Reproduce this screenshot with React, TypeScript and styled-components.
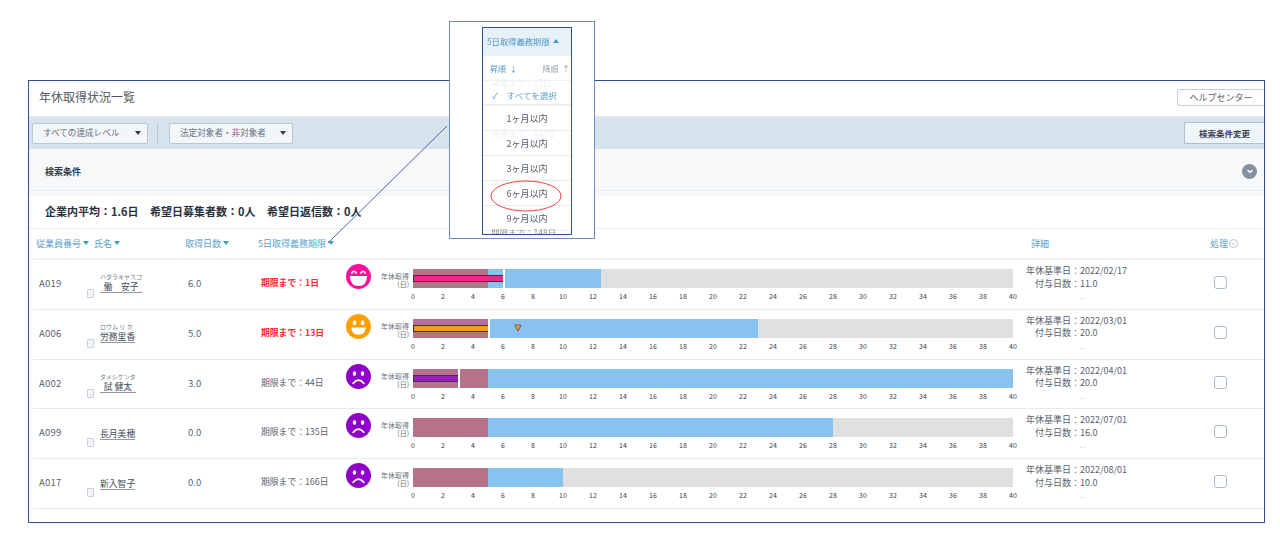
import React from 'react';
import styled, { createGlobalStyle } from 'styled-components';

const GlobalStyle = createGlobalStyle`
  html, body { margin: 0; padding: 0; background: #fff; }
  body {
    width: 1280px;
    height: 539px;
    overflow: hidden;
    font-family: "Noto Sans CJK JP", "Noto Sans", sans-serif;
    color: #556;
  }
`;

type Mood = 'great' | 'good' | 'bad';

interface Employee {
  id: string;
  kana?: string;
  name: string;
  days: string;
  deadline: string;
  urgent?: boolean;
  mood: Mood;
  taken: number;
  granted: number;
  planned?: number;
  baseDate: string;
  grantedDays: string;
}

const employees: Employee[] = [
  { id: 'A019', kana: 'ハタラキヤスコ', name: '働　安子', days: '6.0', deadline: '期限まで：1日', urgent: true, mood: 'great', taken: 6, granted: 12.5, baseDate: '2022/02/17', grantedDays: '11.0' },
  { id: 'A006', kana: 'ロウム リ カ', name: '労務里香', days: '5.0', deadline: '期限まで：13日', urgent: true, mood: 'good', taken: 5, granted: 23, planned: 7, baseDate: '2022/03/01', grantedDays: '20.0' },
  { id: 'A002', kana: 'タメシケンタ', name: '試 健太', days: '3.0', deadline: '期限まで：44日', mood: 'bad', taken: 3, granted: 40, baseDate: '2022/04/01', grantedDays: '20.0' },
  { id: 'A099', name: '長月美穂', days: '0.0', deadline: '期限まで：135日', mood: 'bad', taken: 0, granted: 28, baseDate: '2022/07/01', grantedDays: '16.0' },
  { id: 'A017', name: '新入智子', days: '0.0', deadline: '期限まで：166日', mood: 'bad', taken: 0, granted: 10, baseDate: '2022/08/01', grantedDays: '10.0' },
];

const moodColors: Record<Mood, string> = { great: '#ff0f9b', good: '#ffa000', bad: '#8f00c8' };
const takenColors: Record<Mood, string> = { great: '#f0288c', good: '#f59a1c', bad: '#9c1cc0' };
const ticks = Array.from({ length: 21 }, (_, i) => i * 2);
const ghostRows = ['期限まで：11日', '期限まで：127日', '期限まで：127日', '期限まで：148日'];
const DAY = 15;

const Face = ({ mood }: { mood: Mood }) => (
  <svg width="25" height="25" viewBox="0 0 26 26">
    <circle cx="13" cy="13" r="13" fill={moodColors[mood]} />
    {mood === 'great' && (
      <>
        <path d="M6 9.5 Q8.3 5.5 10.6 9.5 M15.4 9.5 Q17.7 5.5 20 9.5" fill="none" stroke="#fff" strokeWidth="1.6" strokeLinecap="round" />
        <path d="M4 12.5 H22 Q21.5 23 13 23 Q4.5 23 4 12.5 Z" fill="#fff" />
      </>
    )}
    {mood === 'good' && (
      <>
        <ellipse cx="8.8" cy="9" rx="1.9" ry="2.6" fill="#fff" />
        <ellipse cx="17.2" cy="9" rx="1.9" ry="2.6" fill="#fff" />
        <path d="M5.5 14 H20.5 Q20 21.5 13 21.5 Q6 21.5 5.5 14 Z" fill="#fff" />
      </>
    )}
    {mood === 'bad' && (
      <>
        <ellipse cx="8.8" cy="10" rx="1.8" ry="2.4" fill="#fff" />
        <ellipse cx="17.2" cy="10" rx="1.8" ry="2.4" fill="#fff" />
        <path d="M7.5 20 Q13 13.5 18.5 20" fill="none" stroke="#fff" strokeWidth="1.9" strokeLinecap="round" />
      </>
    )}
  </svg>
);

const App = () => {
  return (
    <Page>
      <GlobalStyle />
      <Frame>
        <TitleRow>
          <Title>年休取得状況一覧</Title>
          <HelpButton>ヘルプセンター</HelpButton>
        </TitleRow>

        <Toolbar>
          <SelectButton $width={116}>
            すべての達成レベル
            <Caret />
          </SelectButton>
          <ToolDivider />
          <SelectButton $width={124}>
            法定対象者・非対象者
            <Caret />
          </SelectButton>
          <SearchButton>検索条件変更</SearchButton>
        </Toolbar>

        <Conditions>
          <ConditionsLabel>検索条件</ConditionsLabel>
          <Toggle>
            <svg width="10" height="10" viewBox="0 0 10 10">
              <path d="M2.5 4 L5 6.5 L7.5 4" fill="none" stroke="#fff" strokeWidth="1.5" />
            </svg>
          </Toggle>
        </Conditions>

        <Summary>
          <span>企業内平均：1.6日</span>
          <span>希望日募集者数：0人</span>
          <span>希望日返信数：0人</span>
        </Summary>

        <HeaderRow>
          <HeaderCell>従業員番号<SortMark /></HeaderCell>
          <HeaderCell>氏名<SortMark /></HeaderCell>
          <HeaderCell>取得日数<SortMark /></HeaderCell>
          <HeaderCell>5日取得義務期限<SortMark /></HeaderCell>
          <HeaderCell>詳細</HeaderCell>
          <HeaderCell>
            処理
            <svg width="9" height="9" viewBox="0 0 9 9">
              <circle cx="4.5" cy="4.5" r="4" fill="none" stroke="#a9b6c2" strokeWidth="0.8" />
              <path d="M2.8 3.8 L4.5 5.5 L6.2 3.8" fill="none" stroke="#a9b6c2" strokeWidth="0.8" />
            </svg>
          </HeaderCell>
        </HeaderRow>

        {employees.map((e) => (
          <Row key={e.id}>
            <Code>{e.id}</Code>
            <MiniCheck />
            <NameCell $hasKana={Boolean(e.kana)}>
              {e.kana && <Kana>{e.kana}</Kana>}
              <Name>{e.name}</Name>
            </NameCell>
            <Days>{e.days}</Days>
            <Deadline $urgent={e.urgent}>{e.deadline}</Deadline>
            <FaceCell>
              <Face mood={e.mood} />
            </FaceCell>
            <BarLabel>
              年休取得
              <br />
              (日)
            </BarLabel>
            <Chart>
              <Track>
                <MandatoryZone />
                <GrantedZone style={{ width: (e.granted - 5) * DAY }} />
                {e.taken > 0 && (
                  <TakenBar $color={takenColors[e.mood]} style={{ width: e.taken * DAY }} />
                )}
                {e.taken > 0 && <TakenMark style={{ left: e.taken * DAY }} />}
                {e.planned && (
                  <PlannedMark style={{ left: e.planned * DAY - 4 }}>
                    <svg width="8" height="8" viewBox="0 0 8 8">
                      <path d="M0.8 1 H7.2 L4 7.2 Z" fill="#f59a1c" stroke="#555" strokeWidth="0.8" />
                    </svg>
                  </PlannedMark>
                )}
              </Track>
              <Axis>
                {ticks.map((t) => (
                  <Tick key={t}>{t}</Tick>
                ))}
              </Axis>
            </Chart>
            <Detail>
              <DetailKey>年休基準日：</DetailKey>
              <span>{e.baseDate}</span>
              <DetailKey>付与日数：</DetailKey>
              <span>{e.grantedDays}</span>
              <DetailKey />
              <DetailDots>. .</DetailDots>
            </Detail>
            <CheckCell>
              <Check />
            </CheckCell>
          </Row>
        ))}
      </Frame>

      <Connector width="130" height="125" viewBox="0 0 130 125">
        <path d="M128 2 L9 119" fill="none" stroke="#4a6aa5" strokeWidth="1" />
      </Connector>

      <Callout>
        <Panel>
          <PanelHead>
            5日取得義務期限
            <UpMark />
          </PanelHead>
          <SortRow>
            <span>昇順&nbsp;&nbsp;↓</span>
            <SortOff>降順&nbsp;&nbsp;↑</SortOff>
          </SortRow>
          <AllItem>
            <span>✓</span>
            すべてを選択
          </AllItem>
          <MenuItem>1ヶ月以内</MenuItem>
          <MenuItem>2ヶ月以内</MenuItem>
          <MenuItem>3ヶ月以内</MenuItem>
          <MenuItem>6ヶ月以内</MenuItem>
          <MenuItem>9ヶ月以内</MenuItem>
          <GhostLayer>
            {ghostRows.map((text, i) => (
              <GhostRow key={i}>{text}</GhostRow>
            ))}
          </GhostLayer>
        </Panel>
        <Circle width="72" height="32" viewBox="0 0 72 32">
          <ellipse cx="36" cy="16" rx="35" ry="15" fill="none" stroke="#f0403c" strokeWidth="1" />
        </Circle>
      </Callout>
    </Page>
  );
};

const Page = styled.div`
  position: relative;
  width: 1280px;
  height: 539px;
  padding: 80px 15px 0 28px;
  box-sizing: border-box;
  filter: blur(0.3px);
`;

const Frame = styled.main`
  height: 443px;
  box-sizing: border-box;
  border: 1px solid #2f4f8f;
  background: #fff;
  overflow: hidden;
`;

const TitleRow = styled.header`
  height: 35px;
  display: flex;
  align-items: center;
  justify-content: space-between;
  padding: 0 0 5px 10px;
  box-sizing: border-box;
`;

const Title = styled.h1`
  margin: 0;
  font-size: 12px;
  font-weight: 400;
  color: #4d5a66;
`;

const HelpButton = styled.button`
  width: 87px;
  height: 17px;
  margin-top: 3px;
  padding: 0;
  box-sizing: border-box;
  border: 1px solid #c3d0da;
  border-right: none;
  border-radius: 3px 0 0 3px;
  background: #fff;
  font: inherit;
  font-size: 9px;
  color: #555f69;
`;

const Toolbar = styled.div`
  height: 33px;
  display: flex;
  align-items: center;
  padding-left: 3px;
  background: #d6e3ec;
  border-top: 1px solid #e4ebf0;
  box-sizing: border-box;
`;

const SelectButton = styled.button<{ $width: number }>`
  width: ${(p) => p.$width}px;
  height: 21px;
  display: flex;
  align-items: center;
  justify-content: space-between;
  padding: 0 6px 2px 10px;
  box-sizing: border-box;
  border: 1px solid #b8c9d6;
  border-radius: 2px;
  background: #f2f6f9;
  font: inherit;
  font-size: 8.6px;
  color: #66717c;
  white-space: nowrap;
`;

const Caret = styled.i`
  width: 0;
  height: 0;
  margin-top: 2px;
  border-left: 3.5px solid transparent;
  border-right: 3.5px solid transparent;
  border-top: 4px solid #2c3b4c;
`;

const ToolDivider = styled.div`
  width: 1px;
  height: 21px;
  margin: 0 11px 0 9px;
  background: #b7c7d3;
`;

const SearchButton = styled.button`
  width: 80px;
  height: 22px;
  margin-left: auto;
  padding: 0;
  box-sizing: border-box;
  border: 1px solid #aebfcd;
  border-right: none;
  border-radius: 2px 0 0 2px;
  background: #eff4f8;
  font: inherit;
  font-size: 8.5px;
  font-weight: 700;
  color: #3a4653;
`;

const Conditions = styled.section`
  height: 42px;
  display: flex;
  align-items: center;
  justify-content: space-between;
  padding: 3px 7px 0 16px;
  box-sizing: border-box;
  background: #f6f8fa;
  border-bottom: 1px solid #e6ebef;
`;

const ConditionsLabel = styled.div`
  font-size: 9px;
  font-weight: 700;
  color: #333e4a;
`;

const Toggle = styled.div`
  width: 15px;
  height: 15px;
  display: flex;
  align-items: center;
  justify-content: center;
  border-radius: 50%;
  background: #84909f;
`;

const Summary = styled.section`
  height: 38px;
  display: flex;
  align-items: center;
  gap: 11.5px;
  padding: 0 0 3px 16px;
  box-sizing: border-box;
  border-top: 5px solid #f6f8fa;
  border-bottom: 1px solid #e8edf1;
  font-size: 11px;
  font-weight: 700;
  color: #27313c;
`;

const HeaderRow = styled.div`
  height: 31px;
  display: grid;
  grid-template-columns: 58px 91px 73px 773px 179px 1fr;
  align-items: center;
  margin-left: 4px;
  padding: 0 0 1px 3px;
  border-bottom: 2px solid #f0f2f4;
  box-sizing: border-box;
  font-size: 9px;
  color: #5b9fc9;
`;

const HeaderCell = styled.div`
  display: flex;
  align-items: center;
  gap: 1px;
  white-space: nowrap;
`;

const SortMark = styled.i`
  width: 0;
  height: 0;
  margin-left: 1px;
  border-left: 3.5px solid transparent;
  border-right: 3.5px solid transparent;
  border-top: 4px solid #3d9bd0;
`;

const Row = styled.div`
  height: 49.8px;
  display: grid;
  grid-template-columns: 48px 13px 88px 73px 85px 30px 33px 604px 201px 1fr;
  margin-left: 4px;
  padding-left: 6px;
  box-sizing: border-box;
  border-bottom: 1px solid #e6ebef;
  font-size: 9.5px;
  color: #56626e;
`;

const Code = styled.div`
  padding-top: 16px;
  letter-spacing: 0.2px;
`;

const MiniCheck = styled.div`
  width: 7px;
  height: 9px;
  margin-top: 29px;
  box-sizing: border-box;
  border: 1px solid #c8d2da;
  border-radius: 1px;
  background: #f2f5f7;
`;

const NameCell = styled.div<{ $hasKana: boolean }>`
  align-self: start;
  justify-self: start;
  display: flex;
  flex-direction: column;
  justify-content: flex-end;
  height: ${(p) => (p.$hasKana ? 33 : 31)}px;
`;

const Kana = styled.div`
  font-size: 6px;
  line-height: 8px;
  color: #6d7883;
`;

const Name = styled.div`
  font-size: 8.8px;
  line-height: 11px;
  text-align: center;
  color: #3f4b57;
  border-bottom: 1px solid #8d9aa6;
`;

const Days = styled.div`
  padding-top: 16px;
`;

const Deadline = styled.div<{ $urgent?: boolean }>`
  padding-top: 16px;
  white-space: nowrap;
  font-size: 8.8px;
  font-weight: ${(p) => (p.$urgent ? 700 : 400)};
  color: ${(p) => (p.$urgent ? '#ff2a2a' : '#56626e')};
`;

const FaceCell = styled.div`
  padding-top: 4px;
`;

const BarLabel = styled.div`
  padding-top: 12px;
  font-size: 7px;
  line-height: 8px;
  text-align: right;
  white-space: nowrap;
  color: #66717c;
`;

const Chart = styled.div`
  width: 600px;
  margin-left: 4px;
  padding-top: 9px;
`;

const Track = styled.div`
  position: relative;
  height: 19px;
  display: flex;
  background: #e0e0e0;
`;

const MandatoryZone = styled.div`
  width: 75px;
  background: #b5728a;
`;

const GrantedZone = styled.div`
  background: #88c2ee;
`;

const TakenBar = styled.div<{ $color: string }>`
  position: absolute;
  top: 6px;
  left: 0;
  height: 7px;
  box-sizing: border-box;
  background: ${(p) => p.$color};
  border: 1px solid #40303f;
  border-right: none;
`;

const TakenMark = styled.div`
  position: absolute;
  top: 0;
  width: 2px;
  height: 19px;
  background: #fff;
`;

const PlannedMark = styled.div`
  position: absolute;
  top: 5px;
  line-height: 0;
`;

const Axis = styled.div`
  display: flex;
  justify-content: space-between;
  height: 12px;
  margin-top: 3px;
  font-size: 7px;
  line-height: 11px;
  color: #3a4047;
`;

const Tick = styled.span`
  width: 0;
  display: flex;
  justify-content: center;
`;

const Detail = styled.div`
  display: grid;
  grid-template-columns: 54px auto;
  grid-auto-rows: 12.5px;
  justify-content: start;
  align-content: start;
  margin-left: 13px;
  padding-top: 5px;
  font-size: 9px;
  line-height: 12.5px;
  white-space: nowrap;
`;

const DetailKey = styled.span`
  text-align: right;
`;

const DetailDots = styled.span`
  font-size: 7px;
  color: #a6afb8;
`;

const CheckCell = styled.div`
  padding-top: 16px;
`;

const Check = styled.div`
  width: 13px;
  height: 13px;
  box-sizing: border-box;
  border: 1px solid #a8bccb;
  border-radius: 3px;
  background: #fff;
`;

const Connector = styled.svg`
  position: absolute;
  left: 319px;
  top: 124px;
`;

const Callout = styled.aside`
  position: absolute;
  left: 449px;
  top: 21px;
  width: 146px;
  height: 218px;
  padding: 5px 0 0 32px;
  box-sizing: border-box;
  border: 1px solid #6f8cc0;
  background: #fff;
`;

const Panel = styled.div`
  position: relative;
  width: 90px;
  height: 208px;
  box-sizing: border-box;
  border: 1px solid #2f4f8f;
  overflow: hidden;
  background: #fff;
`;

const PanelHead = styled.div`
  height: 28px;
  display: flex;
  align-items: center;
  gap: 3px;
  padding: 0 0 2px 4px;
  box-sizing: border-box;
  background: #e6f1f8;
  font-size: 8.3px;
  color: #4f97c4;
  white-space: nowrap;
`;

const UpMark = styled.i`
  width: 0;
  height: 0;
  border-left: 3.5px solid transparent;
  border-right: 3.5px solid transparent;
  border-bottom: 4px solid #3d9bd0;
`;

const SortRow = styled.div`
  height: 25px;
  display: flex;
  justify-content: space-between;
  align-items: center;
  padding-left: 7px;
  box-sizing: border-box;
  border-bottom: 1px solid #eef1f3;
  font-size: 8px;
  color: #5b9fc9;
  white-space: nowrap;
`;

const SortOff = styled.span`
  color: #9aa4ad;
  margin-right: 1px;
`;

const AllItem = styled.div`
  height: 25px;
  display: flex;
  align-items: center;
  gap: 9px;
  padding: 4px 0 0 9px;
  box-sizing: border-box;
  border-bottom: 2px solid #eef1f3;
  font-size: 8.5px;
  color: #5b9fc9;
  white-space: nowrap;
`;

const MenuItem = styled.div`
  height: 25px;
  display: flex;
  align-items: center;
  justify-content: center;
  box-sizing: border-box;
  border-bottom: 1px solid #e8ecef;
  font-size: 9px;
  color: #525e6a;
  white-space: nowrap;
`;

const GhostLayer = styled.div`
  position: absolute;
  left: 8px;
  top: 48px;
  display: flex;
  flex-direction: column;
  pointer-events: none;
`;

const GhostRow = styled.div`
  height: 50px;
  font-size: 8.5px;
  line-height: 12px;
  color: #eef1f3;
  white-space: nowrap;
  &:last-child {
    color: #8d97a0;
  }
`;

const Circle = styled.svg`
  position: absolute;
  left: 40px;
  top: 158px;
`;

export default App;
